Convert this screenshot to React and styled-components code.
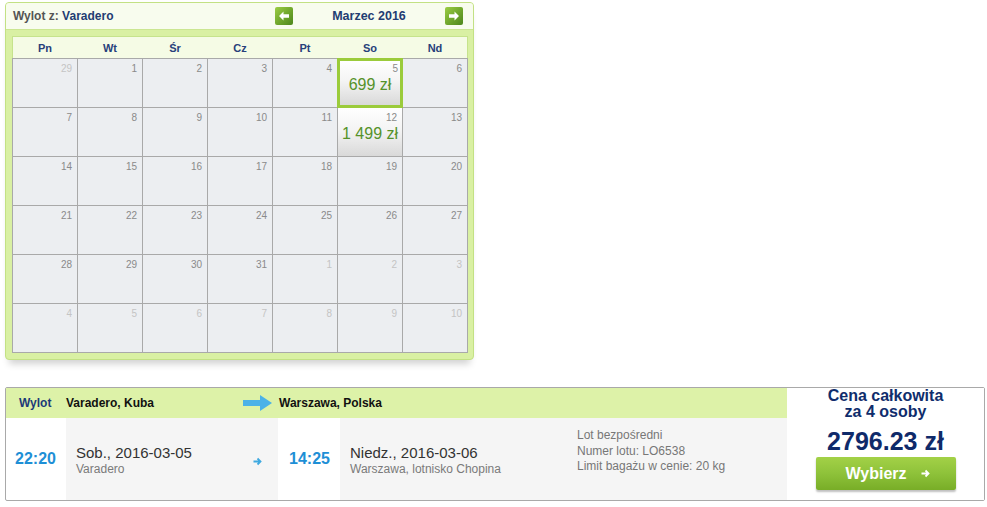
import React from "react";
import styled, { createGlobalStyle } from "styled-components";

const GlobalStyle = createGlobalStyle`
  html, body { margin: 0; padding: 0; background: #fff; }
  body { font-family: "Liberation Sans", Arial, sans-serif; color: #333; }
`;

const Page = styled.div`
  padding: 2px 0 0 5px;
  width: 980px;
`;

/* ---------- calendar ---------- */

const Calendar = styled.section`
  box-sizing: border-box;
  width: 469px;
  border: 1px solid #c3e184;
  border-radius: 4px;
  background: #d9f0a3;
  box-shadow: 0 8px 7px -4px rgba(0, 0, 0, 0.18);
`;

const CalHeader = styled.header`
  display: flex;
  align-items: center;
  height: 26px;
  padding: 0 10px 0 7px;
  background: #f8fcee;
  border-bottom: 1px solid #cbe692;
  border-radius: 3px 3px 0 0;
`;

const Title = styled.div`
  flex: 1;
  font-size: 12px;
  font-weight: bold;
  color: #555;
`;

const Place = styled.span`
  color: #233d72;
`;

const NavButton = styled.button`
  width: 18px;
  height: 18px;
  padding: 0;
  border: 0;
  border-radius: 2px;
  background: linear-gradient(135deg, #9ccd45 0%, #6ea52b 55%, #4d861c 100%);
  display: flex;
  align-items: center;
  justify-content: center;
  cursor: pointer;
`;

const Month = styled.div`
  width: 152px;
  text-align: center;
  font-size: 12.5px;
  font-weight: bold;
  color: #233d72;
`;

const GridArea = styled.div`
  padding: 6px 5px 6px 6px;
`;

const DayRow = styled.div`
  display: grid;
  grid-template-columns: repeat(7, 1fr);
  column-gap: 1px;
  height: 21px;
  align-items: center;
  background: #f5fbe5;
  border: 1px solid #c6e38c;
  border-bottom: none;
`;

const DayName = styled.div`
  text-align: center;
  font-size: 11px;
  font-weight: bold;
  color: #27407a;
`;

const Grid = styled.div`
  display: grid;
  grid-template-columns: repeat(7, 64px);
  grid-auto-rows: 48px;
  gap: 1px;
  padding: 1px;
  background: #a9a9a9;
`;

const Cell = styled.div`
  box-sizing: border-box;
  display: flex;
  flex-direction: column;
  align-items: center;
  background: ${(p) =>
    p.$price ? "linear-gradient(#ffffff 0%, #f4f4f4 45%, #d9d9d9 100%)" : "#eceef1"};
  border: ${(p) => (p.$selected ? "3px solid #9bcb3b" : "0")};
  margin: ${(p) => (p.$selected ? "-1px" : "0")};
  padding: ${(p) => (p.$selected ? "2px 2px 0" : "4px 5px 0")};
`;

const DayNum = styled.span`
  align-self: flex-end;
  font-size: 10px;
  line-height: 11px;
  color: ${(p) => (p.$muted ? "#c4c4c4" : "#8a8a8a")};
`;

const Price = styled.span`
  margin-top: 2px;
  font-size: 16px;
  color: #55922a;
  white-space: nowrap;
`;

/* ---------- flight card ---------- */

const Flight = styled.section`
  box-sizing: border-box;
  width: 980px;
  height: 114px;
  margin-top: 27px;
  border: 1px solid #a9a9a9;
  border-radius: 2px;
  display: grid;
  grid-template-columns: 781px 1fr;
`;

const Route = styled.div`
  display: flex;
  flex-direction: column;
`;

const RouteHeader = styled.div`
  display: grid;
  grid-template-columns: 60px 212px 1fr;
  align-items: center;
  height: 30px;
  background: #ddf2a8;
  font-size: 12px;
  font-weight: bold;
  color: #111;
`;

const Label = styled.span`
  padding-left: 13px;
  color: #1c3a78;
`;

const FromCity = styled.div`
  display: flex;
  align-items: center;
  justify-content: space-between;
  padding-right: 6px;
`;

const ToCity = styled.span`
  padding-left: 1px;
`;

const RouteBody = styled.div`
  display: grid;
  grid-template-columns: 60px 212px 62px 1fr;
  height: 82px;
`;

const Time = styled.div`
  display: flex;
  align-items: center;
  padding-left: ${(p) => p.$pad}px;
  font-size: 16px;
  font-weight: bold;
  color: #1e8fd6;
`;

const Stop = styled.div`
  display: flex;
  align-items: center;
  padding-left: 10px;
  background: #f5f5f5;
`;

const DateBlock = styled.div`
  display: flex;
  flex-direction: column;
  width: ${(p) => (p.$wide ? "227px" : "auto")};
  flex: ${(p) => (p.$wide ? "none" : "1")};
  padding-top: 2px;
`;

const DateText = styled.span`
  font-size: 15px;
  line-height: 18px;
  color: #333;
`;

const PlaceText = styled.span`
  font-size: 12px;
  line-height: 15px;
  color: #7a7a7a;
`;

const StopArrow = styled.span`
  display: flex;
  padding: 5px 16px 0 0;
`;

const Details = styled.div`
  align-self: flex-start;
  display: flex;
  flex-direction: column;
  padding-top: 10px;
  font-size: 12px;
  line-height: 15.5px;
  color: #777;
`;

const PriceCol = styled.div`
  display: flex;
  flex-direction: column;
  align-items: center;
  background: #fff;
`;

const PriceLabel = styled.div`
  font-size: 16px;
  font-weight: bold;
  line-height: 16px;
  text-align: center;
  color: #0f2d6c;
`;

const Total = styled.div`
  margin-top: 8px;
  font-size: 25px;
  font-weight: bold;
  line-height: 26px;
  color: #0f2a6a;
`;

const ChooseButton = styled.button`
  box-sizing: border-box;
  margin-top: 3px;
  width: 140px;
  height: 33px;
  border: 0;
  border-radius: 2px;
  background: linear-gradient(#a3d147 0%, #8ec23a 50%, #78ad27 100%);
  box-shadow: 0 2px 2px rgba(0, 0, 0, 0.25);
  display: flex;
  align-items: center;
  justify-content: center;
  gap: 14px;
  padding: 0 0 0 4px;
  font-family: "Liberation Sans", Arial, sans-serif;
  font-size: 16px;
  font-weight: bold;
  color: #fff;
  cursor: pointer;
`;

/* ---------- icons ---------- */

const NavArrow = ({ dir }) => (
  <svg width="10" height="10" viewBox="0 0 10 10">
    <path
      d="M0 5 L4.5 0.5 V3.3 H10 V6.7 H4.5 V9.5 Z"
      fill="#fff"
      transform={dir === "right" ? "rotate(180 5 5)" : undefined}
    />
  </svg>
);

const BigArrow = () => (
  <svg width="29" height="16" viewBox="0 0 29 16">
    <path d="M0 5 H17 V0 L29 8 L17 16 V11 H0 Z" fill="#4bb2e8" />
  </svg>
);

const SmallArrow = ({ color }) => (
  <svg width="9" height="9" viewBox="0 0 9 9">
    <path d="M0.5 4.5 H7.5 M4.5 1.5 L7.5 4.5 L4.5 7.5" stroke={color} strokeWidth="1.8" fill="none" />
  </svg>
);

/* ---------- data ---------- */

const days = ["Pn", "Wt", "Śr", "Cz", "Pt", "So", "Nd"];

const weeks = [
  [29, 1, 2, 3, 4, 5, 6],
  [7, 8, 9, 10, 11, 12, 13],
  [14, 15, 16, 17, 18, 19, 20],
  [21, 22, 23, 24, 25, 26, 27],
  [28, 29, 30, 31, 1, 2, 3],
  [4, 5, 6, 7, 8, 9, 10],
];

const prices = { 5: "699 zł", 12: "1 499 zł" };

const isMuted = (w, d) => (w === 0 && d === 0) || (w === 4 && d >= 4) || w === 5;

export default function App() {
  return (
    <>
      <GlobalStyle />
      <Page>
        <Calendar>
          <CalHeader>
            <Title>
              Wylot z: <Place>Varadero</Place>
            </Title>
            <NavButton aria-label="Poprzedni miesiąc">
              <NavArrow dir="left" />
            </NavButton>
            <Month>Marzec 2016</Month>
            <NavButton aria-label="Następny miesiąc">
              <NavArrow dir="right" />
            </NavButton>
          </CalHeader>
          <GridArea>
            <DayRow>
              {days.map((d) => (
                <DayName key={d}>{d}</DayName>
              ))}
            </DayRow>
            <Grid>
              {weeks.map((week, w) =>
                week.map((n, d) => {
                  const muted = isMuted(w, d);
                  const price = !muted ? prices[n] : undefined;
                  return (
                    <Cell key={`${w}-${d}`} $price={!!price} $selected={!muted && n === 5}>
                      <DayNum $muted={muted}>{n}</DayNum>
                      {price && <Price>{price}</Price>}
                    </Cell>
                  );
                })
              )}
            </Grid>
          </GridArea>
        </Calendar>

        <Flight>
          <Route>
            <RouteHeader>
              <Label>Wylot</Label>
              <FromCity>
                <span>Varadero, Kuba</span>
                <BigArrow />
              </FromCity>
              <ToCity>Warszawa, Polska</ToCity>
            </RouteHeader>
            <RouteBody>
              <Time $pad={9}>22:20</Time>
              <Stop>
                <DateBlock>
                  <DateText>Sob., 2016-03-05</DateText>
                  <PlaceText>Varadero</PlaceText>
                </DateBlock>
                <StopArrow>
                  <SmallArrow color="#3fa9e0" />
                </StopArrow>
              </Stop>
              <Time $pad={11}>14:25</Time>
              <Stop>
                <DateBlock $wide>
                  <DateText>Niedz., 2016-03-06</DateText>
                  <PlaceText>Warszawa, lotnisko Chopina</PlaceText>
                </DateBlock>
                <Details>
                  <span>Lot bezpośredni</span>
                  <span>Numer lotu: LO6538</span>
                  <span>Limit bagażu w cenie: 20 kg</span>
                </Details>
              </Stop>
            </RouteBody>
          </Route>
          <PriceCol>
            <PriceLabel>
              Cena całkowita
              <br />
              za 4 osoby
            </PriceLabel>
            <Total>2796.23 zł</Total>
            <ChooseButton>
              Wybierz
              <SmallArrow color="#fff" />
            </ChooseButton>
          </PriceCol>
        </Flight>
      </Page>
    </>
  );
}
